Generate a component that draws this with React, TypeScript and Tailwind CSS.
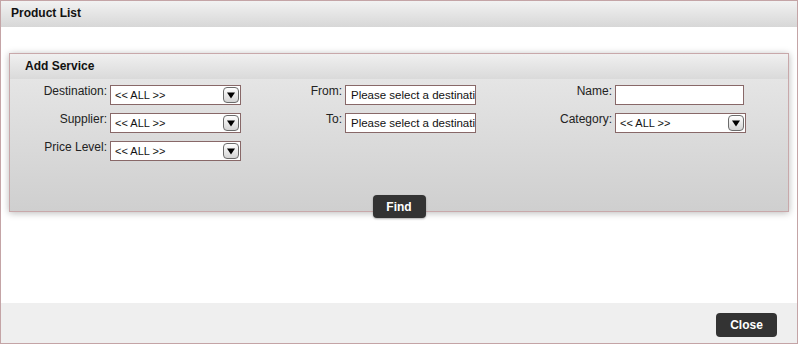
import React from "react";

const font = "font-['Liberation_Sans',Arial,sans-serif]";

function SelectBox({ value = "<< ALL >>" }: { value?: string }) {
  return (
    <div className="relative flex h-[20px] w-[131px] items-center border border-[#886868] bg-white pl-[4px] text-[11px] text-[#111]">
      <span className="leading-none">{value}</span>
      <span className="absolute right-[1px] top-[1px] flex h-[16px] w-[16px] items-center justify-center rounded-[4px] border border-[#6b6b6b] bg-gradient-to-b from-[#ffffff] to-[#d4d4d4]">
        <svg width="8" height="7" viewBox="0 0 8 7">
          <path d="M0 0.5 H8 L4 6.5 Z" fill="#000" />
        </svg>
      </span>
    </div>
  );
}

function TextBox({ value = "", w = "w-[131px]" }: { value?: string; w?: string }) {
  return (
    <input
      readOnly
      value={value}
      className={`h-[20px] ${w} border border-[#886868] bg-white pl-[5px] pr-0 text-[11.5px] text-[#111] outline-none`}
    />
  );
}

function Label({ children }: { children: React.ReactNode }) {
  return (
    <div className="pr-[3px] text-right text-[12px] leading-[13px] text-[#222]">
      {children}
    </div>
  );
}

export default function App() {
  return (
    <div
      className={`${font} flex h-[344px] w-[798px] flex-col border border-[#c4a4a6] bg-white`}
    >
      <div className="flex h-[26px] shrink-0 items-center bg-gradient-to-b from-[#f2f2f2] to-[#d7d7d7] pb-[3px] pl-[10px] text-[12px] font-bold text-[#111]">
        Product List
      </div>

      <div className="flex-1 px-[8px] pt-[26px]">
        <div className="flex h-[159px] flex-col items-center border border-[#c8a8aa] bg-gradient-to-b from-[#e9e9e9] to-[#cfcfcf] shadow-[0_1px_7px_rgba(0,0,0,0.28)]">
          <div className="flex h-[25px] w-full shrink-0 items-center bg-gradient-to-b from-[#f0f0f0] to-[#dadada] pb-[1px] pl-[15px] text-[12px] font-bold text-[#111]">
            Add Service
          </div>

          <div className="grid w-full shrink-0 grid-cols-[100px_131px_104px_131px_139px_131px] gap-y-[8px] pt-[6px]">
            <Label>Destination:</Label>
            <SelectBox />
            <Label>From:</Label>
            <TextBox value="Please select a destination" />
            <Label>Name:</Label>
            <TextBox w="w-[129px]" />

            <Label>Supplier:</Label>
            <SelectBox />
            <Label>To:</Label>
            <TextBox value="Please select a destination" />
            <Label>Category:</Label>
            <SelectBox />

            <Label>Price Level:</Label>
            <SelectBox />
          </div>

          <button className="mt-[34px] h-[23px] w-[53px] shrink-0 rounded-[4px] bg-[#333333] text-[12px] font-bold text-white shadow-[0_1px_2px_rgba(0,0,0,0.3)]">
            Find
          </button>
        </div>
      </div>

      <div className="flex h-[40px] shrink-0 items-start justify-end bg-[#efefef] pr-[20px] pt-[10px]">
        <button className="h-[24px] w-[61px] rounded-[4px] bg-[#333333] text-[12px] font-bold text-white">
          Close
        </button>
      </div>
    </div>
  );
}
